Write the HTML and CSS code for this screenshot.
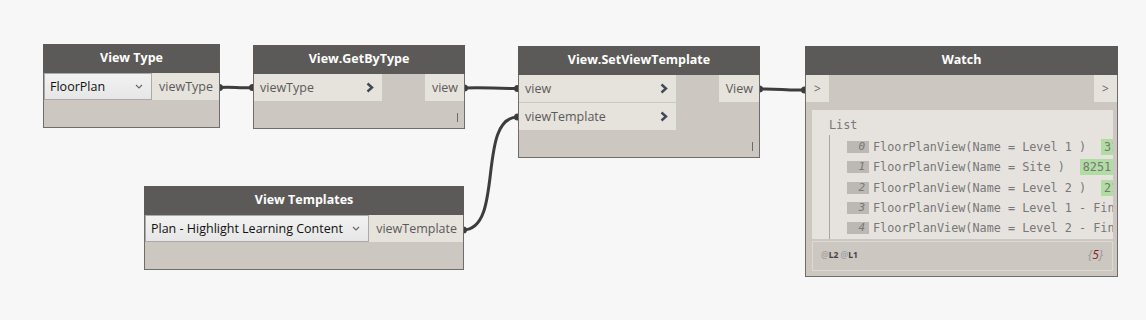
FILE: index.html
```html
<!DOCTYPE html>
<html lang="en">
<head>
  <meta charset="UTF-8" />
  <title>Dynamo graph</title>
  <link rel="stylesheet" href="styles.css">
</head>
<body>
  <div class="canvas">
    <svg class="wires" width="1146" height="320" viewBox="0 0 1146 320">
      <g fill="none" stroke="#3d3d3d" stroke-width="3">
        <path d="M219,87.5 C236,86.5 236,88.5 253,87.5" />
        <path d="M464,88 C491,87 491,89 518,88.5" />
        <path d="M759,89 C782,88.5 782,90.5 805,90" />
        <path d="M463,230 C505,230 476,117 518,117" />
      </g>
      <g fill="#3d3d3d">
        <circle cx="219.5" cy="87.5" r="3.5" />
        <circle cx="252.5" cy="87.5" r="3.5" />
        <circle cx="464.5" cy="88" r="3.5" />
        <circle cx="517.5" cy="88.5" r="3.5" />
        <circle cx="759.5" cy="89" r="3.5" />
        <circle cx="804.5" cy="90" r="3.5" />
        <circle cx="463.5" cy="230" r="3.5" />
        <circle cx="517.5" cy="117" r="3.5" />
      </g>
    </svg>

    <!-- View Type -->
    <div class="node" style="left:43px;top:44px;width:177px;height:84px">
      <div class="title">View Type</div>
      <div class="row">
        <div class="select">
          <span>FloorPlan</span>
          <svg class="caret" width="8" height="5" viewBox="0 0 8 5"><path d="M1,1 L4,4 L7,1" fill="none" stroke="#666" stroke-width="1.1"/></svg>
        </div>
        <div class="port out">viewType</div>
      </div>
    </div>

    <!-- View.GetByType -->
    <div class="node" style="left:253px;top:45px;width:212px;height:84px">
      <div class="title">View.GetByType</div>
      <div class="io">
        <div class="inputs w128">
          <div class="port in">viewType<svg class="arrow" width="8" height="11" viewBox="0 0 8 11"><path d="M1.5,1.5 L6,5.5 L1.5,9.5" fill="none" stroke="#3f4954" stroke-width="2.4"/></svg></div>
        </div>
        <div class="outputs">
          <div class="port out">view</div>
        </div>
      </div>
      <div class="lacing"></div>
    </div>

    <!-- View.SetViewTemplate -->
    <div class="node" style="left:518px;top:46px;width:242px;height:112px">
      <div class="title">View.SetViewTemplate</div>
      <div class="io">
        <div class="inputs w157">
          <div class="port in">view<svg class="arrow" width="8" height="11" viewBox="0 0 8 11"><path d="M1.5,1.5 L6,5.5 L1.5,9.5" fill="none" stroke="#3f4954" stroke-width="2.4"/></svg></div>
          <div class="port in">viewTemplate<svg class="arrow" width="8" height="11" viewBox="0 0 8 11"><path d="M1.5,1.5 L6,5.5 L1.5,9.5" fill="none" stroke="#3f4954" stroke-width="2.4"/></svg></div>
        </div>
        <div class="outputs">
          <div class="port out">View</div>
        </div>
      </div>
      <div class="lacing"></div>
    </div>

    <!-- View Templates -->
    <div class="node" style="left:144px;top:186px;width:320px;height:84px">
      <div class="title">View Templates</div>
      <div class="row">
        <div class="select">
          <span>Plan - Highlight Learning Content</span>
          <svg class="caret" width="8" height="5" viewBox="0 0 8 5"><path d="M1,1 L4,4 L7,1" fill="none" stroke="#666" stroke-width="1.1"/></svg>
        </div>
        <div class="port out">viewTemplate</div>
      </div>
    </div>

    <!-- Watch -->
    <div class="node watch" style="left:805px;top:46px;width:313px;height:231px">
      <div class="title">Watch</div>
      <div class="watch-ports">
        <div class="port mini">&gt;</div>
        <div class="port mini">&gt;</div>
      </div>
      <div class="watch-list">
        <div class="list-label">List</div>
        <div class="tree">
          <div class="item"><span class="idx">0</span>FloorPlanView(Name = Level 1 )<span class="elem">312</span></div>
          <div class="item"><span class="idx">1</span>FloorPlanView(Name = Site )<span class="elem">8251</span></div>
          <div class="item"><span class="idx">2</span>FloorPlanView(Name = Level 2 )<span class="elem">218</span></div>
          <div class="item"><span class="idx">3</span>FloorPlanView(Name = Level 1 - Final )</div>
          <div class="item"><span class="idx">4</span>FloorPlanView(Name = Level 2 - Final )</div>
        </div>
      </div>
      <div class="watch-footer">
        <span class="levels"><b>@</b>L2 <b>@</b>L1</span>
        <span class="count">{<em>5</em>}</span>
      </div>
    </div>
  </div>
</body>
</html>
```

FILE: styles.css
```css
body {
  margin: 0;
  padding: 0;
  background-color: #f7f7f7;
  font-family: 'Open Sans', 'Noto Sans', sans-serif;
}

.canvas {
  position: relative;
  width: 1146px;
  height: 320px;
  overflow: hidden;
}

.wires {
  position: absolute;
  left: 0;
  top: 0;
}

.node {
  position: absolute;
  box-sizing: border-box;
  display: flex;
  flex-direction: column;
  background: #ccc7c0;
  border: 1px solid #6f6d6b;
  border-top: none;
}

.title {
  height: 29px;
  line-height: 28px;
  background: #5c5a58;
  color: #fff;
  font-weight: bold;
  font-size: 12.5px;
  text-align: center;
  margin: 0 -1px;
}

.row {
  display: flex;
  height: 27px;
}

.select {
  flex: 1;
  display: flex;
  align-items: center;
  justify-content: space-between;
  box-sizing: border-box;
  padding: 0 8px 0 5px;
  border: 1px solid #aaa;
  background: linear-gradient(#f2f2f2, #e6e6e6);
  color: #111;
  font-size: 12.5px;
}

.port {
  display: flex;
  align-items: center;
  height: 27px;
  background: #e6e2dc;
  color: #5a5a5a;
  font-size: 12.5px;
  box-sizing: border-box;
}

.port.out {
  padding: 0 6px 0 7px;
}

.port.in {
  justify-content: space-between;
  padding: 0 8px 0 6px;
}

.io {
  display: flex;
  justify-content: space-between;
}

.inputs {
  display: flex;
  flex-direction: column;
  gap: 1px;
}

.w128 { width: 128px; }
.w157 { width: 157px; }

/* small tick in the bottom right corner */
.lacing {
  margin-top: auto;
  align-self: flex-end;
  margin-right: 6px;
  margin-bottom: 6px;
  width: 1px;
  height: 9px;
  background: #6a6a6a;
}

/* watch node */
.watch-ports {
  display: flex;
  justify-content: space-between;
}

.port.mini {
  width: 23px;
  justify-content: center;
  color: #666;
  font-size: 12px;
}

.watch-list {
  margin: 8px 4px 0 6px;
  height: 129px;
  box-sizing: border-box;
  background: #e6e3de;
  padding: 7px 0 0 17px;
  overflow: hidden;
  white-space: nowrap;
  font-family: 'DejaVu Sans Mono', monospace;
  font-size: 11.8px;
  color: #777;
}

.list-label {
  line-height: 16px;
}

.tree {
  position: relative;
  border-left: 1px solid #aaa6a1;
  margin-top: 2px;
  padding: 2px 0 9px 17px;
}

.tree::after {
  content: "";
  position: absolute;
  left: -3px;
  bottom: -2px;
  width: 5px;
  height: 5px;
  border-radius: 50%;
  background: #aaa6a1;
}

.item {
  height: 20.3px;
  display: flex;
  align-items: center;
}

.idx {
  flex: none;
  width: 22px;
  height: 12px;
  line-height: 12px;
  margin-right: 4px;
  padding-right: 4px;
  box-sizing: border-box;
  background: #bcb9b4;
  color: #777;
  font-style: italic;
  text-align: right;
  font-size: 11px;
}

.elem {
  flex: none;
  margin-left: 15px;
  padding: 0 3px;
  line-height: 16px;
  background: #b1dca4;
}

.watch-footer {
  margin: 2px 4px 0 6px;
  height: 30px;
  box-sizing: border-box;
  border: 1px solid #ddd9d3;
  display: flex;
  align-items: center;
  justify-content: space-between;
  padding: 0 9px 4px 8px;
}

.levels {
  font-family: 'Noto Sans', sans-serif;
  font-size: 8.5px;
  font-weight: bold;
  color: #444;
}

.levels b {
  color: #999;
  font-weight: normal;
}

.count {
  font-size: 12px;
  font-style: italic;
  color: #999;
}

.count em {
  color: #8b1a1a;
}
```
